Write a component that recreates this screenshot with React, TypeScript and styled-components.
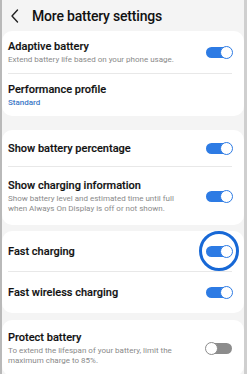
import React from 'react';
import styled, { createGlobalStyle } from 'styled-components';

const GlobalStyle = createGlobalStyle`
  html, body {
    margin: 0;
    padding: 0;
    background: #ffffff;
  }
  * {
    box-sizing: border-box;
  }
`;

const Screen = styled.div`
  width: 247px;
  height: 374px;
  overflow: hidden;
  background: #f4f4f4;
  border-left: 2px solid #b9b9b9;
  border-right: 3px solid #cfcfcf;
  font-family: Roboto, 'Noto Sans', sans-serif;
  color: #111;
`;

const Header = styled.div`
  height: 31px;
  display: flex;
  align-items: center;
  gap: 12px;
  padding-left: 8px;
`;

const Title = styled.h1`
  margin: 0;
  font-size: 14px;
  font-weight: 500;
  letter-spacing: -0.2px;
`;

const Card = styled.div<{ $gap: number }>`
  background: #ffffff;
  border-radius: 10px;
  margin-bottom: ${({ $gap }) => $gap}px;
  padding: 0 12px 0 6px;
`;

const Row = styled.div<{ $height: number; $divider?: boolean }>`
  position: relative;
  display: flex;
  align-items: center;
  justify-content: space-between;
  height: ${({ $height }) => $height}px;
  border-bottom: ${({ $divider }) => ($divider ? '1px solid #e8e8e8' : 'none')};
`;

const Texts = styled.div`
  display: flex;
  flex-direction: column;
  gap: 2px;
`;

const Label = styled.div`
  font-size: 11px;
  font-weight: 500;
  line-height: 13px;
  -webkit-text-stroke: 0.15px #111;
`;

const Sub = styled.div<{ $accent?: boolean }>`
  font-size: 8px;
  line-height: 10px;
  color: ${({ $accent }) => ($accent ? '#3b78c6' : '#8a8a8a')};
  font-weight: ${({ $accent }) => ($accent ? 500 : 400)};
  max-width: 180px;
`;

const Track = styled.div<{ $on: boolean }>`
  position: relative;
  width: 26px;
  height: 11px;
  border-radius: 6px;
  flex-shrink: 0;
  background: ${({ $on }) => ($on ? '#2d7be4' : '#8c8c8c')};
`;

const Knob = styled.div<{ $on: boolean }>`
  position: absolute;
  top: -1px;
  ${({ $on }) => ($on ? 'right: -1px;' : 'left: -1px;')}
  width: 13px;
  height: 13px;
  border-radius: 50%;
  background: #fff;
  border: 1.5px solid ${({ $on }) => ($on ? '#2d7be4' : '#8c8c8c')};
`;

const Ring = styled.div`
  position: absolute;
  right: -7px;
  top: 50%;
  width: 40px;
  height: 40px;
  margin-top: -20px;
  border-radius: 50%;
  border: 3px solid #1768d6;
`;

type Setting = {
  label: string;
  sub?: string;
  accent?: boolean;
  on?: boolean;
  ring?: boolean;
  height: number;
};

const Toggle: React.FC<{ on: boolean }> = ({ on }) => (
  <Track $on={on}>
    <Knob $on={on} />
  </Track>
);

const groups: { gap: number; rows: Setting[] }[] = [
  {
    gap: 14,
    rows: [
      {
        label: 'Adaptive battery',
        sub: 'Extend battery life based on your phone usage.',
        on: true,
        height: 43,
      },
      {
        label: 'Performance profile',
        sub: 'Standard',
        accent: true,
        height: 42,
      },
    ],
  },
  {
    gap: 6,
    rows: [
      { label: 'Show battery percentage', on: true, height: 37 },
      {
        label: 'Show charging information',
        sub: 'Show battery level and estimated time until full when Always On Display is off or not shown.',
        on: true,
        height: 58,
      },
    ],
  },
  {
    gap: 7,
    rows: [
      { label: 'Fast charging', on: true, ring: true, height: 41 },
      { label: 'Fast wireless charging', on: true, height: 41 },
    ],
  },
  {
    gap: 0,
    rows: [
      {
        label: 'Protect battery',
        sub: 'To extend the lifespan of your battery, limit the maximum charge to 85%.',
        on: false,
        height: 56,
      },
    ],
  },
];

const BackIcon = () => (
  <svg width="10" height="16" viewBox="0 0 10 16" fill="none">
    <path d="M7.5 2L2 8l5.5 6" stroke="#222" strokeWidth="1.4" strokeLinecap="round" strokeLinejoin="round" />
  </svg>
);

const App: React.FC = () => (
  <Screen>
    <GlobalStyle />
    <Header>
      <BackIcon />
      <Title>More battery settings</Title>
    </Header>
    {groups.map((group, gi) => (
      <Card key={gi} $gap={group.gap}>
        {group.rows.map((row, ri) => (
          <Row key={row.label} $height={row.height} $divider={ri < group.rows.length - 1}>
            <Texts>
              <Label>{row.label}</Label>
              {row.sub && <Sub $accent={row.accent}>{row.sub}</Sub>}
            </Texts>
            {row.on !== undefined && <Toggle on={row.on} />}
            {row.ring && <Ring />}
          </Row>
        ))}
      </Card>
    ))}
  </Screen>
);

export default App;
